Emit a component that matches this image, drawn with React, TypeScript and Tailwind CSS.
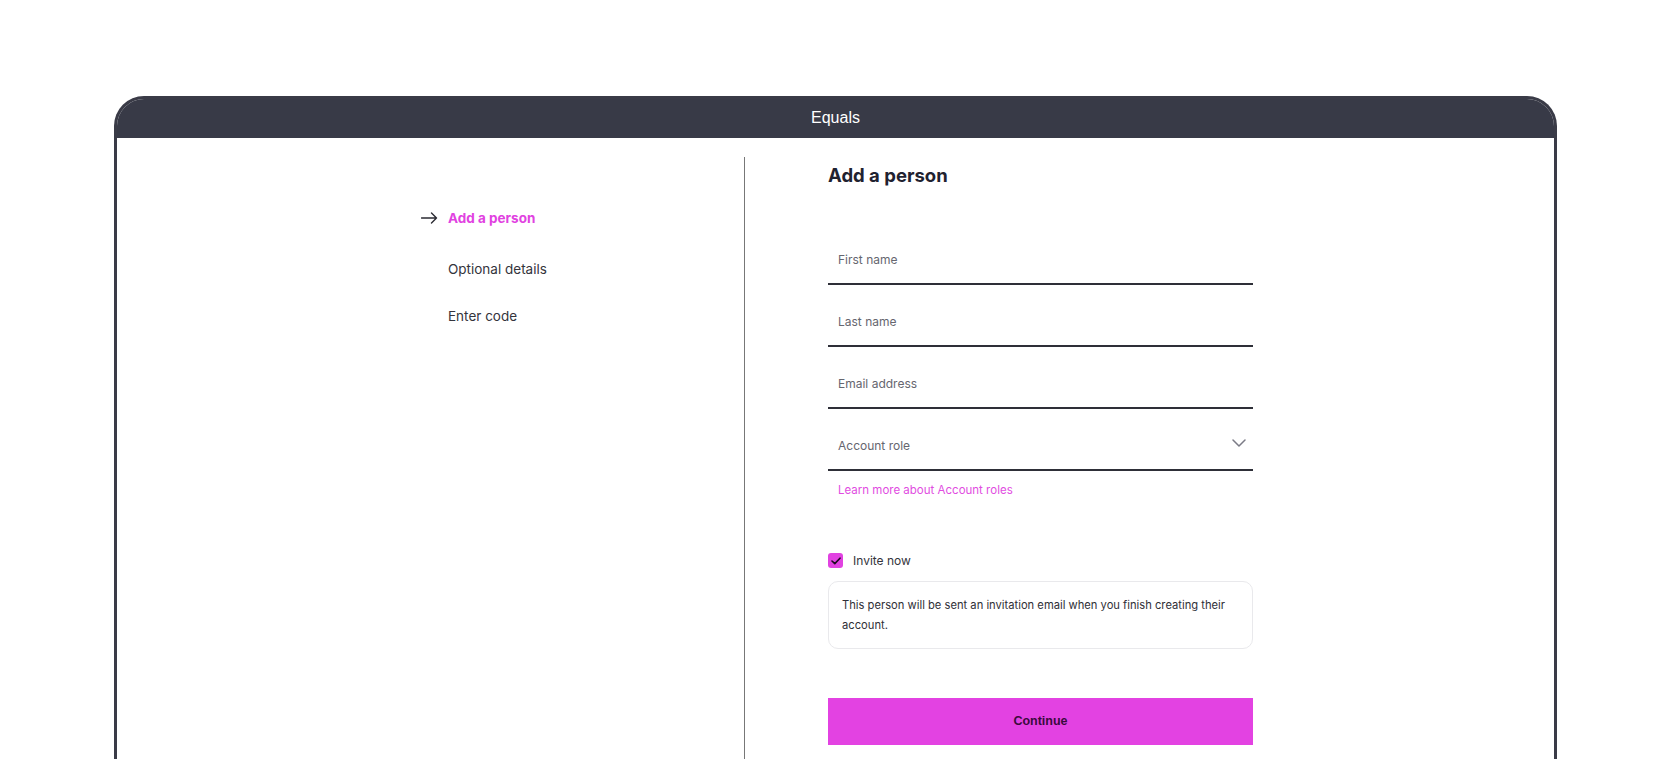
import React from "react";

const fields = ["First name", "Last name", "Email address"];

function ArrowRight() {
  return (
    <svg width="17" height="12" viewBox="0 0 17 12" fill="none" className="shrink-0">
      <path d="M0.5 6H15.5M10.5 1L15.5 6L10.5 11" stroke="#2b2b33" strokeWidth="1.4" strokeLinecap="round" strokeLinejoin="round" />
    </svg>
  );
}

function Chevron() {
  return (
    <svg width="14" height="8" viewBox="0 0 14 8" fill="none">
      <path d="M1 1L7 7L13 1" stroke="#7b7b86" strokeWidth="1.5" strokeLinecap="round" strokeLinejoin="round" />
    </svg>
  );
}

function Field({ label }: { label: string }) {
  return (
    <div className="h-[62px] border-b-2 border-[#2e2f38] flex items-end px-[10px] pb-[14px]">
      <span className="text-[12px] leading-[18px] text-[#66666f]">{label}</span>
    </div>
  );
}

export default function App() {
  return (
    <div
      className="w-full h-[759px] bg-white overflow-hidden pt-[96px] pl-[114px] pr-[111px]"
      style={{ fontFamily: "Inter, 'Noto Sans', sans-serif" }}
    >
      <div className="h-[700px] border-[3px] border-b-0 border-[#3a3b47] rounded-t-[30px] overflow-hidden flex flex-col">
        <div className="h-[39px] bg-[#383a47] flex items-center justify-center shrink-0">
          <span
            className="text-white text-[16px] pb-[2px]"
            style={{ fontFamily: "'Liberation Sans', Arial, sans-serif" }}
          >
            Equals
          </span>
        </div>

        <div className="flex flex-1 bg-white">
          {/* steps */}
          <nav className="w-[627px] shrink-0 pl-[304px] pt-[69px] flex flex-col">
            <div className="flex items-center gap-[10px] h-[22px]">
              <ArrowRight />
              <span className="text-[13.5px] font-bold text-[#e142e1]">Add a person</span>
            </div>
            <div className="pl-[27px] mt-[29px] h-[22px] flex items-center text-[13.5px] text-[#34343c]">
              Optional details
            </div>
            <div className="pl-[27px] mt-[25px] h-[22px] flex items-center text-[13.5px] text-[#34343c]">
              Enter code
            </div>
          </nav>

          <div className="w-px bg-[#777777] mt-[19px] shrink-0" />

          {/* form */}
          <div className="pl-[83px] pt-[25px] w-[508px]">
            <h1 className="text-[18.5px] leading-[24px] font-bold text-[#1f2230]">Add a person</h1>

            <div className="mt-[36px] flex flex-col">
              {fields.map((f) => (
                <Field key={f} label={f} />
              ))}
              <div className="h-[62px] border-b-2 border-[#2e2f38] flex items-end justify-between pl-[10px] pr-[7px] pb-[14px]">
                <span className="text-[12px] leading-[18px] text-[#66666f]">Account role</span>
                <span className="pb-[8px]">
                  <Chevron />
                </span>
              </div>
            </div>

            <div className="mt-[11px] pl-[10px] text-[11.5px] leading-[16px] text-[#e14ce1]">
              Learn more about Account roles
            </div>

            <label className="mt-[55px] flex items-center gap-[10px] h-[15px]">
              <span className="w-[15px] h-[15px] rounded-[3px] bg-[#e142e1] flex items-center justify-center">
                <svg width="10" height="8" viewBox="0 0 10 8" fill="none">
                  <path d="M1 4L3.8 6.6L9 1.2" stroke="#1c0a20" strokeWidth="1.6" strokeLinecap="round" strokeLinejoin="round" />
                </svg>
              </span>
              <span className="text-[12px] text-[#34343c]">Invite now</span>
            </label>

            <div className="mt-[13px] border border-[#e9e9ec] rounded-[10px] pl-[13px] pr-[8px] py-[13px] text-[11.2px] leading-[20px] text-[#2f2f37]">
              This person will be sent an invitation email when you finish creating their account.
            </div>

            <button
              className="mt-[49px] w-full h-[47px] bg-[#e342e2] text-[#3a0b3d] text-[12.5px] font-bold"
              style={{ fontFamily: "'Liberation Sans', Arial, sans-serif" }}
            >
              Continue
            </button>
          </div>
        </div>
      </div>
    </div>
  );
}
